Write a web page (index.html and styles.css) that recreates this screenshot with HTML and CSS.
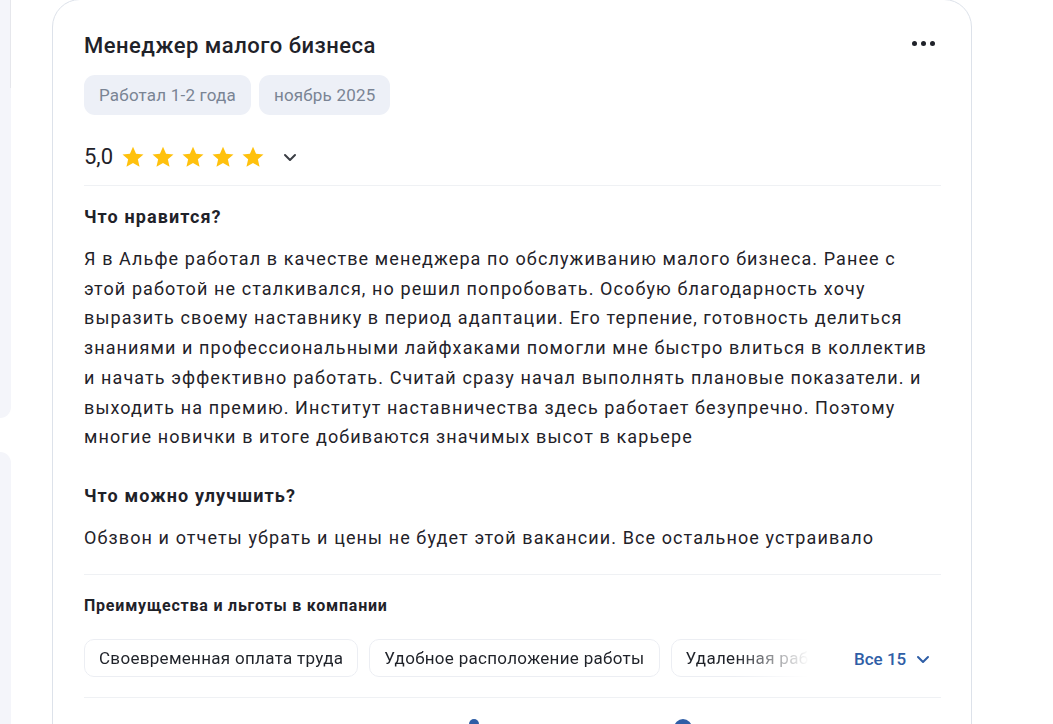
FILE: index.html
```html
<!DOCTYPE html>
<html lang="ru">
<head>
<meta charset="utf-8">
<title>Отзыв</title>
<link rel="stylesheet" href="styles.css">
</head>
<body>
<div class="page">
  <aside class="side">
    <div class="side-panel side-panel--top"></div>
    <div class="side-panel side-panel--bottom"></div>
  </aside>
  <article class="card">
    <header class="card-head">
      <h2 class="title">Менеджер малого бизнеса</h2>
      <button class="more" aria-label="Ещё"><span></span><span></span><span></span></button>
    </header>
    <div class="tags">
      <span class="tag">Работал 1-2 года</span>
      <span class="tag">ноябрь 2025</span>
    </div>
    <div class="rating">
      <span class="score">5,0</span>
      <span class="stars">
        <svg class="star" viewBox="0 0 24 24"><path d="M12 1.8l3.05 6.9 7.45.7-5.65 4.95 1.7 7.35L12 17.9l-6.55 3.8 1.7-7.35L1.5 9.4l7.45-.7z"/></svg>
        <svg class="star" viewBox="0 0 24 24"><path d="M12 1.8l3.05 6.9 7.45.7-5.65 4.95 1.7 7.35L12 17.9l-6.55 3.8 1.7-7.35L1.5 9.4l7.45-.7z"/></svg>
        <svg class="star" viewBox="0 0 24 24"><path d="M12 1.8l3.05 6.9 7.45.7-5.65 4.95 1.7 7.35L12 17.9l-6.55 3.8 1.7-7.35L1.5 9.4l7.45-.7z"/></svg>
        <svg class="star" viewBox="0 0 24 24"><path d="M12 1.8l3.05 6.9 7.45.7-5.65 4.95 1.7 7.35L12 17.9l-6.55 3.8 1.7-7.35L1.5 9.4l7.45-.7z"/></svg>
        <svg class="star" viewBox="0 0 24 24"><path d="M12 1.8l3.05 6.9 7.45.7-5.65 4.95 1.7 7.35L12 17.9l-6.55 3.8 1.7-7.35L1.5 9.4l7.45-.7z"/></svg>
      </span>
      <svg class="chev chev--dark" viewBox="0 0 16 16"><path d="M3 6l5 5 5-5" fill="none" stroke="currentColor" stroke-width="2" stroke-linecap="round" stroke-linejoin="round"/></svg>
    </div>
    <hr class="sep">
    <section class="block">
      <h3 class="block-title">Что нравится?</h3>
      <p class="block-text">Я в Альфе работал в качестве менеджера по обслуживанию малого бизнеса. Ранее с этой работой не сталкивался, но решил попробовать. Особую благодарность хочу выразить своему наставнику в период адаптации. Его терпение, готовность делиться знаниями и профессиональными лайфхаками помогли мне быстро влиться в коллектив и начать эффективно работать. Считай сразу начал выполнять плановые показатели. и выходить на премию. Институт наставничества здесь работает безупречно. Поэтому многие новички в итоге добиваются значимых высот в карьере</p>
    </section>
    <section class="block">
      <h3 class="block-title">Что можно улучшить?</h3>
      <p class="block-text">Обзвон и отчеты убрать и цены не будет этой вакансии. Все остальное устраивало</p>
    </section>
    <hr class="sep sep--benefits">
    <section class="benefits">
      <h4 class="benefits-title">Преимущества и льготы в компании</h4>
      <div class="benefits-row">
        <div class="chips">
          <span class="chip">Своевременная оплата труда</span>
          <span class="chip">Удобное расположение работы</span>
          <span class="chip">Удаленная работа</span>
        </div>
        <button class="all">Все 15
          <svg class="chev chev--blue" viewBox="0 0 16 16"><path d="M3 6l5 5 5-5" fill="none" stroke="currentColor" stroke-width="2" stroke-linecap="round" stroke-linejoin="round"/></svg>
        </button>
      </div>
    </section>
    <hr class="sep sep--footer">
    <footer class="actions">
      <span class="act act--a"><svg viewBox="0 0 20 20"><path d="M3 15l9-9 3 3-9 9H3z" fill="currentColor"/></svg></span>
      <span class="act act--b"><svg viewBox="0 0 20 20"><rect x="5" y="1" width="10" height="16" rx="5" fill="currentColor"/></svg></span>
      <span class="act act--c"><svg viewBox="0 0 20 20"><circle cx="10" cy="10" r="9" fill="currentColor"/></svg></span>
    </footer>
  </article>
</div>
</body>
</html>
```

FILE: styles.css
```css
* { box-sizing: border-box; }

html, body {
  margin: 0;
  padding: 0;
  background: #ffffff;
  overflow: hidden;
}

body {
  font-family: Roboto, "Noto Sans", Arial, sans-serif;
  color: #1f2229;
}

.page {
  display: flex;
  align-items: flex-start;
  gap: 41px;
  height: 724px;
  overflow: hidden;
}

.side {
  width: 11px;
  flex: none;
  display: flex;
  flex-direction: column;
  gap: 34px;
}

.side-panel {
  background: #f4f5fa;
  width: 11px;
}

.side-panel--top {
  position: relative;
  height: 418px;
  border-bottom-right-radius: 12px;
}

.side-panel--top::before {
  content: "";
  position: absolute;
  top: 0;
  right: 0;
  width: 1px;
  height: 88px;
  background: #e6e7ec;
}

.side-panel--bottom {
  height: 300px;
  border-top-right-radius: 12px;
}

.card {
  width: 920px;
  flex: none;
  margin-top: -1px;
  border: 1px solid #dde2ea;
  border-radius: 28px;
  padding: 30px 30px 0 31px;
  background: #fff;
  height: 780px;
}

.card-head {
  display: flex;
  align-items: center;
  justify-content: space-between;
}

.title {
  margin: 0;
  font-size: 22px;
  font-weight: 500;
  line-height: 32px;
  letter-spacing: 0.5px;
}

.more {
  display: flex;
  gap: 4px;
  border: 0;
  background: none;
  padding: 0;
  margin: -6px 6px 0 0;
  cursor: pointer;
}

.more span {
  width: 5px;
  height: 5px;
  border-radius: 50%;
  background: #1f2229;
}

.tags {
  display: flex;
  gap: 8px;
  margin-top: 13px;
}

.tag {
  background: #edf0f7;
  color: #7a8494;
  font-size: 17px;
  letter-spacing: 0.2px;
  line-height: 40px;
  padding: 0 15px;
  border-radius: 11px;
}

.rating {
  display: flex;
  align-items: center;
  margin-top: 28px;
  height: 28px;
}

.score {
  font-size: 22px;
  line-height: 28px;
  margin-right: 8px;
}

.stars {
  display: flex;
  gap: 6px;
}

.star {
  width: 24px;
  height: 24px;
  fill: #ffc10d;
}

.chev {
  width: 16px;
  height: 16px;
}

.chev--dark {
  color: #3a3d44;
  margin-left: 17px;
}

.sep {
  border: 0;
  border-top: 1px solid #eff1f4;
  margin: 0;
}

.rating + .sep {
  margin-top: 14px;
}

.block {
  margin-top: 18px;
}

.block + .block {
  margin-top: 31px;
}

.block-title {
  margin: 0;
  font-size: 18px;
  font-weight: 700;
  letter-spacing: 1.1px;
  line-height: 26px;
}

.block-text {
  margin: 14px 0 0;
  font-size: 18px;
  letter-spacing: 1.1px;
  line-height: 29.7px;
}

.sep--benefits {
  margin-top: 21px;
}

.benefits {
  padding-top: 20px;
}

.benefits-title {
  margin: 0;
  font-size: 16px;
  font-weight: 700;
  letter-spacing: 0.78px;
  line-height: 22px;
}

.benefits-row {
  display: flex;
  align-items: center;
  margin-top: 22px;
}

.chips {
  display: flex;
  gap: 11px;
  width: 725px;
  overflow: hidden;
  -webkit-mask-image: linear-gradient(to right, #000 0, #000 650px, transparent 725px);
  mask-image: linear-gradient(to right, #000 0, #000 650px, transparent 725px);
}

.chip {
  flex: none;
  border: 1px solid #eceef3;
  border-radius: 10px;
  font-size: 17px;
  letter-spacing: 0.3px;
  line-height: 36px;
  padding: 0 14px;
  white-space: nowrap;
}

.all {
  display: flex;
  align-items: center;
  gap: 9px;
  margin-left: 45px;
  margin-top: 3px;
  border: 0;
  background: none;
  padding: 0;
  font-family: inherit;
  font-size: 17px;
  font-weight: 500;
  color: #2f5ea6;
  cursor: pointer;
}

.chev--blue {
  color: #2f5ea6;
}

.sep--footer {
  margin-top: 20px;
}

.actions {
  display: flex;
  padding-top: 20px;
  color: #2f5ea6;
}

.act svg {
  width: 20px;
  height: 20px;
  display: block;
}

.act--a { margin-left: 2px; }
.act--b { margin-left: 358px; }
.act--c { margin-left: 189px; }
```
